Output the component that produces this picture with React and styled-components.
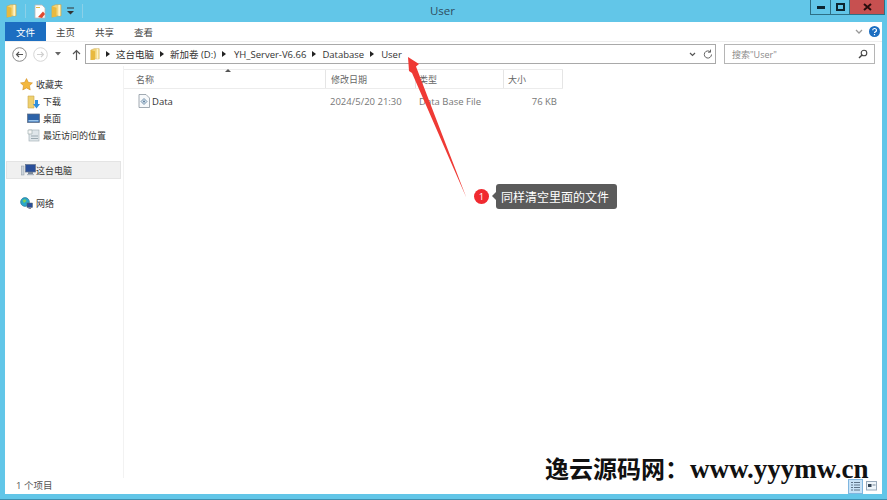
import React from "react";
import styled, { createGlobalStyle } from "styled-components";

const Global = createGlobalStyle`
  html, body { margin: 0; padding: 0; background: #62c6e8; }
  #root { width: 887px; height: 500px; overflow: hidden; }
  * { box-sizing: border-box; }
`;
const sans = `"Open Sans", "Noto Sans CJK SC", sans-serif`;

const Window = styled.div`
  position: relative; width: 887px; height: 500px; background: #62c6e8;
  font-family: ${sans}; color: #3c3c3c; display: flex; flex-direction: column; overflow: hidden;
  border-bottom: 1px solid #3f8fae;
`;
const TitleBar = styled.div`
  height: 22px; flex: none; display: flex; position: relative; padding: 0 2px 0 6px; justify-content: space-between; align-items: flex-start;
`;
const Quick = styled.div`display: flex; align-items: center; gap: 5px; height: 22px;`;
const Sep = styled.div`width: 1px; height: 14px; background: #8bd0e8; margin: 0 3px;`;
const Title = styled.div`
  position: absolute; left: -2px; right: 0; top: 3px; text-align: center; font-size: 11.5px; line-height: 16px; color: #2f4d60;
`;
const Controls = styled.div`display: flex; height: 15px; border: 1px solid #2d6f85; border-top: 0; position: relative;`;
const Ctl = styled.div`
  width: ${p => p.$w}px; background: ${p => p.$bg || "transparent"}; display: flex; align-items: center; justify-content: center;
  border-right: ${p => p.$last ? "0" : "1px solid #2d6f85"};
`;
const Client = styled.div`
  flex: 1; margin: 0 5px 5px 5px; background: #fff; display: flex; flex-direction: column; min-height: 0;
`;
const Ribbon = styled.div`
  height: 20px; flex: none; display: flex; align-items: center; position: relative; border-bottom: 1px solid #eee;
`;
const FileTab = styled.div`
  width: 41px; height: 19px; background: #1c6ec1; color: #fff; font-size: 9.5px; display: flex; align-items: center; justify-content: center;
  font-family: "Noto Sans CJK SC", sans-serif;
`;
const Tab = styled.div`
  width: 39px; text-align: center; font-size: 9.5px; color: #444; font-family: "Noto Sans CJK SC", sans-serif;
`;
const RibbonEnd = styled.div`margin-left: auto; display: flex; align-items: center; gap: 6px; padding-right: 2px;`;
const NavRow = styled.div`
  height: 24px; flex: none; display: flex; align-items: center; padding-left: 7px; padding-right: 7px;
`;
const NavBtns = styled.div`display: flex; align-items: center; width: 73px; gap: 6px;`;
const AddressBox = styled.div`
  width: 631px; height: 20px; border: 1px solid #a9a9a9; display: flex; align-items: center; font-size: 9.5px; color: #333; padding-left: 4px; gap: 5px;
  position: relative; font-family: ${sans};
`;
const Crumb = styled.span`white-space: nowrap; margin-left: ${p => p.$ml || 0}px;`;
const Arrow = styled.span`
  width: 0; height: 0; border-left: 4px solid #222; border-top: 3px solid transparent; border-bottom: 3px solid transparent; flex: none; margin: 0 1px;
`;
const AddrEnd = styled.div`
  position: absolute; right: 2px; top: 0; height: 18px; display: flex; align-items: center; gap: 7px;
`;
const SearchBox = styled.div`
  margin-left: 8px; width: 151px; height: 20px; border: 1px solid #b5b5b5; display: flex; align-items: center; justify-content: space-between; padding: 0 6px 0 7px;
  font-size: 9px; color: #8a8a8a;
`;
const Body = styled.div`flex: 1; display: flex; min-height: 0;`;
const Side = styled.div`
  width: 119px; flex: none; display: flex; flex-direction: column; padding-top: 10px; font-size: 9px; color: #333; border-right: 1px solid #f2f2f2;
`;
const SideItem = styled.div`
  height: 17px; display: flex; align-items: center; gap: ${p => p.$gap ?? 3}px; padding-left: ${p => p.$indent}px; margin: ${p => p.$top || 0}px 0 0 1px; white-space: nowrap;
  ${p => p.$sel && "background: #f0f0f0; border: 1px solid #e4e4e4; height: 18px; margin-right: 2px;"}
`;
const Main = styled.div`flex: 1; display: flex; flex-direction: column; min-width: 0; padding-top: 3px;`;
const HeadRow = styled.div`
  display: flex; width: 439px; height: 20px; border-top: 1px solid #ececec; border-bottom: 1px solid #ececec; position: relative;
`;
const HeadCell = styled.div`
  width: ${p => p.$w}px; border-right: 1px solid #e5e5e5; font-size: 9px; color: #666; padding-left: ${p => p.$pl || 5}px; display: flex; align-items: center;
`;
const SortUp = styled.span`
  position: absolute; left: 101px; top: -1px; width: 0; height: 0; border-left: 3px solid transparent; border-right: 3px solid transparent; border-bottom: 3px solid #555;
`;
const FileRow = styled.div`display: flex; width: 439px; height: 18px; margin-top: 3px; align-items: center; font-size: 9.5px; color: #777;`;
const Cell = styled.div`
  width: ${p => p.$w}px; padding-left: ${p => p.$pl || 0}px; display: flex; align-items: center; gap: 2px; white-space: nowrap;
  color: ${p => p.$c || "#777"}; justify-content: ${p => p.$right ? "flex-end" : "flex-start"};
`;
const Status = styled.div`
  height: 16px; flex: none; display: flex; align-items: center; padding-left: 11px; font-size: 9.5px; color: #555; justify-content: space-between; padding-right: 4px;
`;
const StatusText = styled.span`margin-bottom: 2px;`;
const Views = styled.div`display: flex; align-items: center; gap: 2px;`;
const ViewBtn = styled.div`
  width: ${p => p.$on ? 15 : 13}px; height: 15px; display: flex; align-items: center; justify-content: center; ${p => p.$on && "background:#c9e3f7;border:1px solid #7fb6e0;"}
`;
const Callout = styled.div`
  position: absolute; left: 474px; top: 184px; display: flex; align-items: center; gap: 7px;
`;
const Badge = styled.div`
  width: 15px; height: 15px; border-radius: 50%; background: #f02a30; color: #fff; font-size: 9.5px; display: flex; align-items: center; justify-content: center;
`;
const Tip = styled.div`
  position: relative; background: #5b5b5b; color: #fff; border-radius: 3px; height: 25px; width: 121px; display: flex; align-items: center; padding-left: 5px;
  font-size: 12px; font-family: "Noto Sans CJK SC", sans-serif; white-space: nowrap;
  &::before { content: ""; position: absolute; left: -4px; top: 8px; border-right: 4px solid #5b5b5b; border-top: 4px solid transparent; border-bottom: 4px solid transparent; }
`;
const Overlay = styled.svg`position: absolute; left: 0; top: 0; pointer-events: none;`;
const Watermark = styled.div`
  position: absolute; left: 545px; top: 452px; white-space: nowrap; color: #111; font-weight: 700; font-size: 24px; line-height: 32px;
  font-family: "Noto Sans CJK SC", sans-serif; display: flex; align-items: baseline;
`;
const WmLatin = styled.span`font-family: "Liberation Serif", serif; font-size: 27px; margin-left: 1px;`;

const Folder = ({ s = 12 }) => (
  <svg width={s} height={s * 1.25} viewBox="0 0 12 15">
    <path d="M1 2.5 L5 .8 H11 V13 H5 L1 14.5Z" fill="#f2d57c" stroke="#c9a44a" strokeWidth=".6" />
    <path d="M1 2.5 L6 4 V14 L1 14.5Z" fill="#e8b93f" />
    <rect x="8" y="1" width="2" height="12" fill="#fff3c4" />
  </svg>
);
const Doc = () => (
  <svg width="12" height="15" viewBox="0 0 12 15">
    <path d="M1 1H8L11 4V14H1Z" fill="#fff" stroke="#b8b8b8" strokeWidth=".8" />
    <path d="M4 13 L9 7.5 L11 10 L8 14Z" fill="#e0492f" />
    <rect x="2" y="3" width="4" height="1" fill="#e8b93f" />
  </svg>
);
const Star = () => (
  <svg width="13" height="13" viewBox="0 0 24 24"><path d="M12 1l3.4 7 7.6 1-5.5 5.3 1.4 7.7L12 18.4 5.1 22l1.4-7.7L1 9l7.6-1z" fill="#f3b73d" stroke="#d08a1c" strokeWidth="1" /></svg>
);
const Download = () => (
  <svg width="13" height="14" viewBox="0 0 13 14">
    <path d="M1 1H7V13H1Z" fill="#eed06f" stroke="#c9a44a" strokeWidth=".6" />
    <path d="M8 5H11V9H13L9.5 13.5L6 9H8Z" fill="#2f8fdc" />
  </svg>
);
const Desktop = () => (
  <svg width="13" height="11" viewBox="0 0 13 11"><rect x=".5" y="1" width="12" height="8.5" fill="#2c62a8" stroke="#5b6a80" strokeWidth=".7" /><rect x="1.5" y="7" width="10" height="1.5" fill="#9bc5ea" /></svg>
);
const Recent = () => (
  <svg width="13" height="13" viewBox="0 0 13 13"><rect x="2" y="1" width="10" height="11" fill="#dfe6ea" stroke="#a8b4ba" strokeWidth=".7" /><path d="M1 1h4v4H1z" fill="#f6f6f6" stroke="#9aa" strokeWidth=".6" /><path d="M4 7h7M4 9.5h7" stroke="#9aa8b0" /></svg>
);
const PC = () => (
  <svg width="15" height="12" viewBox="0 0 15 12">
    <rect x="4.5" y=".5" width="10" height="7.5" fill="#2a4f9a" stroke="#64748a" strokeWidth=".7" />
    <rect x="7" y="8" width="5" height="2" fill="#7a8798" /><rect x="6" y="10" width="7" height="1.2" fill="#a8b2bf" />
    <rect x=".5" y="2" width="2.5" height="9" fill="#cdd5dc" stroke="#8a96a2" strokeWidth=".5" />
  </svg>
);
const Net = () => (
  <svg width="13" height="13" viewBox="0 0 13 13">
    <circle cx="5" cy="5" r="4.4" fill="#2aa7c9" stroke="#1c6a8e" strokeWidth=".6" />
    <path d="M2.5 3.5 L5 2 L6.5 4 L4 6Z" fill="#7ccd5a" />
    <rect x="7" y="6" width="5.5" height="4.5" fill="#2a4f9a" stroke="#566" strokeWidth=".5" /><rect x="8.5" y="10.5" width="2.5" height="1.5" fill="#889" />
  </svg>
);
const DataIcon = () => (
  <svg width="12" height="14" viewBox="0 0 12 14">
    <path d="M1 .5H8L11.5 4V13.5H1Z" fill="#f7f9fb" stroke="#8b95a0" strokeWidth=".8" />
    <path d="M3 7.5 L6 4.5 L9 7.5 L6 10.5Z" fill="#d7e4ef" stroke="#5d7d9b" strokeWidth=".8" />
    <circle cx="6" cy="7.5" r="1" fill="#5d7d9b" />
  </svg>
);

export default function App() {
  return (
    <Window>
      <Global />
      <TitleBar>
        <Quick>
          <Folder s={11} />
          <Sep />
          <Doc />
          <Folder s={11} />
          <svg width="7" height="8" viewBox="0 0 7 8"><path d="M0 1h7" stroke="#333" /><path d="M0 4h7L3.5 7.5z" fill="#333" /></svg>
          <Sep />
        </Quick>
        <Title>User</Title>
        <Controls>
          <Ctl $w={20}><svg width="8" height="3"><rect width="8" height="3" fill="#0d2530" /></svg></Ctl>
          <Ctl $w={19}><svg width="9" height="8"><rect x="1" y="1" width="7" height="6" fill="none" stroke="#0d2530" strokeWidth="2" /></svg></Ctl>
          <Ctl $w={34} $bg="#c75050" $last><svg width="9" height="8" viewBox="0 0 9 8"><path d="M1 1l7 6M8 1L1 7" stroke="#2a0d0d" strokeWidth="2" /></svg></Ctl>
        </Controls>
      </TitleBar>
      <Client>
        <Ribbon>
          <FileTab>文件</FileTab>
          <Tab>主页</Tab>
          <Tab>共享</Tab>
          <Tab>查看</Tab>
          <RibbonEnd>
            <svg width="8" height="6" viewBox="0 0 8 6"><path d="M1 1l3 3 3-3" fill="none" stroke="#999" strokeWidth="1.3" /></svg>
            <svg width="11" height="11" viewBox="0 0 11 11"><circle cx="5.5" cy="5.5" r="5.5" fill="#1c6ec1" /><path d="M3.7 4.2a1.9 1.7 0 1 1 2.8 1.5c-.7.4-1 .7-1 1.4" fill="none" stroke="#fff" strokeWidth="1.2" /><rect x="4.9" y="8" width="1.2" height="1.2" fill="#fff" /></svg>
          </RibbonEnd>
        </Ribbon>
        <NavRow>
          <NavBtns>
            <svg width="15" height="15" viewBox="0 0 15 15"><circle cx="7.5" cy="7.5" r="6.8" fill="#fff" stroke="#8a8a8a" /><path d="M11 7.5H4.5M7 5L4.5 7.5 7 10" fill="none" stroke="#555" strokeWidth="1.1" /></svg>
            <svg width="15" height="15" viewBox="0 0 15 15"><circle cx="7.5" cy="7.5" r="6.8" fill="#fff" stroke="#d6d6d6" /><path d="M4 7.5h6.5M8 5l2.5 2.5L8 10" fill="none" stroke="#d0d0d0" strokeWidth="1.1" /></svg>
            <svg width="6" height="4" viewBox="0 0 6 4" style={{ marginLeft: 1 }}><path d="M0 0h6L3 3.5z" fill="#666" /></svg>
            <svg width="9" height="11" viewBox="0 0 9 11" style={{ marginLeft: 5 }}><path d="M4.5 11V1.5M1 5l3.5-3.5L8 5" fill="none" stroke="#555" strokeWidth="1.2" /></svg>
          </NavBtns>
          <AddressBox>
            <Folder s={10} />
            <Arrow />
            <Crumb>这台电脑</Crumb>
            <Arrow />
            <Crumb>新加卷 (D:)</Crumb>
            <Arrow />
            <Crumb $ml={2}>YH_Server-V6.66</Crumb>
            <Arrow />
            <Crumb>Database</Crumb>
            <Arrow />
            <Crumb $ml={1}>User</Crumb>
            <AddrEnd>
              <svg width="7" height="5" viewBox="0 0 7 5"><path d="M1 1l2.5 2.5L6 1" fill="none" stroke="#555" strokeWidth="1.2" /></svg>
              <svg width="10" height="11" viewBox="0 0 10 11"><path d="M8.5 5.5a3.6 3.6 0 1 1-1.2-2.7M7.5 .6v2.6H5" fill="none" stroke="#666" strokeWidth="1" /></svg>
            </AddrEnd>
          </AddressBox>
          <SearchBox>
            <span>搜索"User"</span>
            <svg width="10" height="10" viewBox="0 0 10 10"><circle cx="6" cy="4" r="2.8" fill="none" stroke="#444" strokeWidth="1.1" /><path d="M4 6L1 9" stroke="#444" strokeWidth="1.5" /></svg>
          </SearchBox>
        </NavRow>
        <Body>
          <Side>
            <SideItem $indent={14}><Star />收藏夹</SideItem>
            <SideItem $indent={21}><Download />下载</SideItem>
            <SideItem $indent={21}><Desktop />桌面</SideItem>
            <SideItem $indent={21}><Recent />最近访问的位置</SideItem>
            <SideItem $indent={14} $top={17} $sel $gap={0}><PC />这台电脑</SideItem>
            <SideItem $indent={14} $top={16}><Net />网络</SideItem>
          </Side>
          <Main>
            <HeadRow>
              <HeadCell $w={202} $pl={12}>名称</HeadCell>
              <SortUp />
              <HeadCell $w={90} $pl={5}>修改日期</HeadCell>
              <HeadCell $w={88} $pl={3}>类型</HeadCell>
              <HeadCell $w={59} $pl={4}>大小</HeadCell>
            </HeadRow>
            <FileRow>
              <Cell $w={206} $pl={14} $c="#333"><DataIcon />Data</Cell>
              <Cell $w={89}>2024/5/20 21:30</Cell>
              <Cell $w={88}>Data Base File</Cell>
              <Cell $w={50} $right>76 KB</Cell>
            </FileRow>
          </Main>
        </Body>
        <Status>
          <StatusText>1 个项目</StatusText>
          <Views>
            <ViewBtn $on><svg width="11" height="11" viewBox="0 0 11 11"><path d="M1 1.5h2M1 4h2M1 6.5h2M1 9h2M4 1.5h6M4 4h6M4 6.5h6M4 9h6" stroke="#5f7488" /></svg></ViewBtn>
            <ViewBtn><svg width="11" height="10" viewBox="0 0 11 10"><rect x=".5" y=".5" width="10" height="8.5" fill="#eef5fa" stroke="#9ab" /><rect x="2" y="3" width="3.5" height="3" fill="#345" /><path d="M6.5 4h3" stroke="#789" /></svg></ViewBtn>
          </Views>
        </Status>
      </Client>
      <Overlay width="887" height="500" viewBox="0 0 887 500">
        <path d="M408 57 L419 64 L416 66.5 L466.5 198 L412 73 L409 71Z" fill="#ef3a35" />
      </Overlay>
      <Callout>
        <Badge>1</Badge>
        <Tip>同样清空里面的文件</Tip>
      </Callout>
      <Watermark>逸云源码网：<WmLatin>www.yyymw.cn</WmLatin></Watermark>
    </Window>
  );
}
